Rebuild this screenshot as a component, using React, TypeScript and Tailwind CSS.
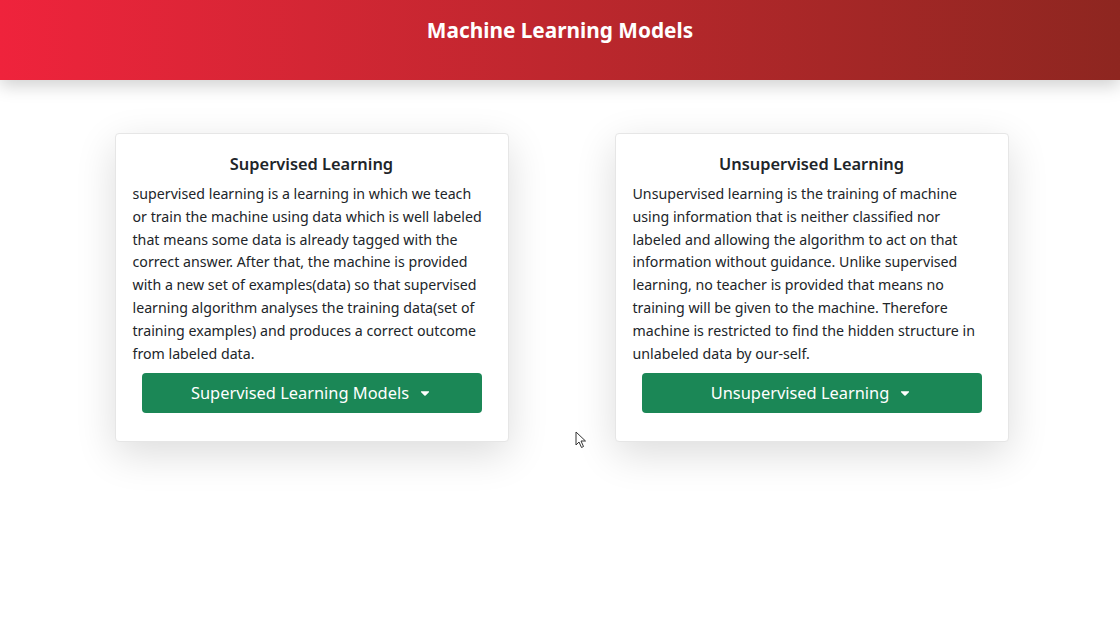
import { FaCaretDown } from "react-icons/fa"

const cards = [
    {
        title: "Supervised Learning",
        text: "supervised learning is a learning in which we teach or train the machine using data which is well labeled that means some data is already tagged with the correct answer. After that, the machine is provided with a new set of examples(data) so that supervised learning algorithm analyses the training data(set of training examples) and produces a correct outcome from labeled data.",
        button: "Supervised Learning Models",
    },
    {
        title: "Unsupervised Learning",
        text: "Unsupervised learning is the training of machine using information that is neither classified nor labeled and allowing the algorithm to act on that information without guidance. Unlike supervised learning, no teacher is provided that means no training will be given to the machine. Therefore machine is restricted to find the hidden structure in unlabeled data by our-self.",
        button: "Unsupervised Learning",
    },
]

const App = () => {
    return (
        <div className="relative min-h-[625px] bg-white font-['Noto_Sans',sans-serif] text-[#212529]">
            <header className="h-[80px] bg-gradient-to-r from-[#ef233c] to-[#8e2620] shadow-[0_6px_16px_rgba(0,0,0,0.18)] flex justify-center pt-[14px]">
                <h1 className="text-white font-bold text-[20.8px] leading-[32px]">Machine Learning Models</h1>
            </header>

            <main className="flex justify-center gap-[106px] pt-[53px] pl-[3px]">
                {cards.map((c) => (
                    <div key={c.title} className="w-[394px] bg-white rounded-[4px] border border-[#e6e6e6] shadow-[0_12px_40px_rgba(0,0,0,0.14)] pl-[17px] pr-[20px] pt-[17px] pb-[28px]">
                        <h2 className="text-center font-semibold text-[16.4px] leading-[26px] mb-[6px] pl-[3px]">{c.title}</h2>
                        <p className="text-[14.2px] leading-[22.8px]">{c.text}</p>
                        <button className="mt-[8px] ml-[9px] w-[340px] h-[40px] rounded-[4px] bg-[#1b8756] text-white text-[16.4px] flex items-center justify-center gap-[9px]">
                            {c.button}
                            <FaCaretDown className="text-[14px]" />
                        </button>
                    </div>
                ))}
            </main>

            <svg className="absolute left-[575px] top-[431px]" width="12" height="18" viewBox="0 0 12 18">
                <path d="M1 1 L1 14 L4 11 L6.5 16.5 L8.5 15.5 L6 10 L10.5 10 Z" fill="white" stroke="#333" strokeWidth="1" />
            </svg>
        </div>
    )
}

export default App
